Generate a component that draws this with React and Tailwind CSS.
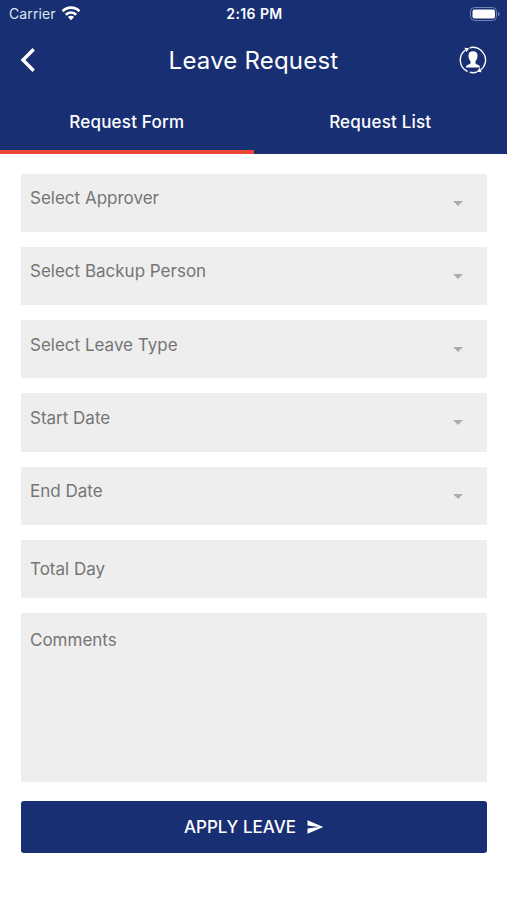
import React, { useState } from 'react';
import clsx from 'clsx';
import { MdSend } from 'react-icons/md';

const selectFields = ['Select Approver', 'Select Backup Person', 'Select Leave Type', 'Start Date', 'End Date'];
const tabs = ['Request Form', 'Request List'];

const WifiIcon = () => (
  <svg className="ml-[5px] h-[15px] w-[20px]" viewBox="0 0 20 15" fill="none" stroke="white" strokeWidth="2.7">
    <path d="M1.6 5.2a11.8 11.8 0 0 1 16.8 0" />
    <path d="M4.8 8.7a7.3 7.3 0 0 1 10.4 0" />
    <path d="M10 14.2 6.9 11.1a4.4 4.4 0 0 1 6.2 0z" fill="white" stroke="none" />
  </svg>
);

const BatteryIcon = () => (
  <svg className="h-[14px] w-[30px]" viewBox="0 0 30 14" fill="none">
    <rect x="0.5" y="0.5" width="26" height="13" rx="4" stroke="#7582b1" />
    <rect x="2.5" y="2.5" width="22.5" height="9" rx="2" fill="white" />
    <path d="M28 5v4c1.2-.4 1.7-1.2 1.7-2S29.2 5.4 28 5z" fill="#7582b1" />
  </svg>
);

const ProfileIcon = () => (
  <svg className="h-[28px] w-[28px]" viewBox="0 0 28 28" fill="none">
    <path
      d="M6 4.2A12.7 12.7 0 0 0 8.5 25.5M10.5 1.8A12.7 12.7 0 0 1 21.5 24.2M10.8 26.3A12.7 12.7 0 0 0 18 26"
      stroke="white"
      strokeWidth="1.4"
    />
    <path d="M5.4 1.8 10.2 2.3 7.4 6.2zM22.6 26.2 17.8 25.700 20.600 21.800z" fill="white" />
    <path d="M14 5.300c-3.200 0-4.700 1.900-4.500 4.600.1 2.300.9 4.200 2 5.300v2.300c-.5 1.100-4.400 1.100-4.700 3.900h14.400c-.3-2.800-4.200-2.800-4.700-3.900v-2.300c1.100-1.100 1.900-3 2-5.300.2-2.700-1.300-4.600-4.500-4.600z" fill="white" />
  </svg>
);

const SelectField = ({ label }) => (
  <button type="button" className="flex h-[58.3px] w-full justify-between bg-[#eeeeee] pr-[24px] pl-[9.5px] text-left">
    <span className="mt-[12.5px] text-[17px] leading-6 text-[#757575]">{label}</span>
    <svg className="mt-[27px] h-[5px] w-[10px]" viewBox="0 0 10 5" fill="#a6afaf">
      <path d="M0 0h10L5 5z" />
    </svg>
  </button>
);

const App = () => {
  const [activeTab, setActiveTab] = useState(tabs[0]);

  return (
    <div className="h-[900px] w-[507px] overflow-hidden bg-white font-['Inter',sans-serif]">
      <header className="h-[153.5px] bg-[#192f74] text-white">
        {/* Status bar */}
        <div className="grid h-[27px] grid-cols-3 items-center pr-[7px] pl-[9px] text-[14px]">
          <div className="flex items-center tracking-[0.1px] text-[#dfe4f2]">
            Carrier
            <WifiIcon />
          </div>
          <span className="text-center font-semibold tracking-[0.4px]">2:16 PM</span>
          <div className="flex justify-end">
            <BatteryIcon />
          </div>
        </div>

        {/* Title bar */}
        <div className="flex h-[65px] items-center justify-between pr-[20px] pl-[20px]">
          <button type="button" className="w-[28px]" aria-label="Back">
            <svg className="h-[24px] w-[16px]" viewBox="0 0 16 24" fill="none" stroke="white" strokeWidth="3.4">
              <path d="M13.7 1.2 3 12l10.7 10.8" />
            </svg>
          </button>
          <h1 className="pt-0.5 text-[24px] leading-8 tracking-[0.2px]">Leave Request</h1>
          <button type="button" aria-label="Profile">
            <ProfileIcon />
          </button>
        </div>

        {/* Tabs */}
        <div className="grid h-[61.5px] grid-cols-2">
          {tabs.map((tab) => (
            <button
              key={tab}
              type="button"
              onClick={() => setActiveTab(tab)}
              className={clsx(
                'border-b-4 pt-[3px] text-[17px] font-medium tracking-[0.2px]',
                activeTab === tab ? 'border-[#ec4639]' : 'border-transparent'
              )}
            >
              {tab}
            </button>
          ))}
        </div>
      </header>

      <main className="flex flex-col gap-[15px] px-[20.5px] pt-5">
        {selectFields.map((label) => (
          <SelectField key={label} label={label} />
        ))}
        <input
          placeholder="Total Day"
          className="h-[58.3px] bg-[#eeeeee] px-[9.5px] text-[17px] placeholder:text-[#757575]"
        />
        <textarea
          placeholder="Comments"
          className="h-[168.5px] resize-none bg-[#eeeeee] px-[9.5px] pt-[15px] text-[17px] leading-6 placeholder:text-[#757575]"
        />
        <button
          type="button"
          className="mt-1 flex h-[52px] items-center justify-center gap-[10px] rounded-[3px] bg-[#192f74] pt-px pl-px text-[17px] font-medium text-white"
        >
          APPLY LEAVE
          <MdSend className="h-[18px] w-[18px]" />
        </button>
      </main>
    </div>
  );
};

export default App;
